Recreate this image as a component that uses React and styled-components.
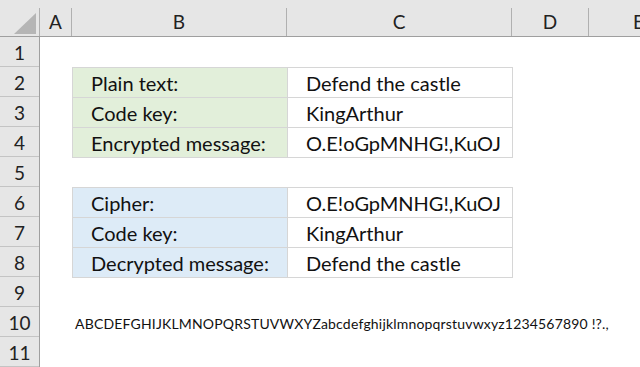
import React from 'react';
import styled, { createGlobalStyle } from 'styled-components';

const GlobalStyle = createGlobalStyle`
  html, body {
    margin: 0;
    padding: 0;
    background: #ffffff;
  }
  body {
    font-family: Lato, "Open Sans", sans-serif;
    color: #1f1f1f;
    overflow: hidden;
  }
`;

const columns = [
  { name: 'A', width: 32 },
  { name: 'B', width: 215 },
  { name: 'C', width: 225 },
  { name: 'D', width: 77 },
  { name: 'E', width: 100 },
];

const encryptTable = [
  ['Plain text:', 'Defend the castle'],
  ['Code key:', 'KingArthur'],
  ['Encrypted message:', 'O.E!oGpMNHG!,KuOJ'],
];

const decryptTable = [
  ['Cipher:', 'O.E!oGpMNHG!,KuOJ'],
  ['Code key:', 'KingArthur'],
  ['Decrypted message:', 'Defend the castle'],
];

const ROW_COUNT = 11;

const App = () => {
  const rows = [];
  for (let i = 1; i <= ROW_COUNT; i++) {
    if (i >= 2 && i <= 4) {
      const [label, value] = encryptTable[i - 2];
      rows.push(
        <Row key={i}>
          <Spacer />
          <LabelCell fill="#e2efda" last={i === 4}>{label}</LabelCell>
          <ValueCell last={i === 4}>{value}</ValueCell>
        </Row>
      );
    } else if (i >= 6 && i <= 8) {
      const [label, value] = decryptTable[i - 6];
      rows.push(
        <Row key={i}>
          <Spacer />
          <LabelCell fill="#ddebf7" last={i === 8}>{label}</LabelCell>
          <ValueCell last={i === 8}>{value}</ValueCell>
        </Row>
      );
    } else if (i === 10) {
      rows.push(
        <Row key={i}>
          <Spacer />
          <Alphabet>ABCDEFGHIJKLMNOPQRSTUVWXYZabcdefghijklmnopqrstuvwxyz1234567890 !?.,</Alphabet>
        </Row>
      );
    } else {
      rows.push(<Row key={i} />);
    }
  }

  return (
    <>
      <GlobalStyle />
      <Sheet>
        <HeaderBar>
          <Corner>
            <svg width="22" height="21" viewBox="0 0 22 21">
              <polygon points="22,0 22,21 0,21" fill="#b5b5b5" />
            </svg>
          </Corner>
          {columns.map((col) => (
            <ColHeader key={col.name} width={col.width}>
              {col.name}
            </ColHeader>
          ))}
        </HeaderBar>
        <Body>
          <RowNumbers>
            {Array.from({ length: ROW_COUNT }, (_, i) => (
              <RowNumber key={i}>{i + 1}</RowNumber>
            ))}
          </RowNumbers>
          <Grid>{rows}</Grid>
        </Body>
      </Sheet>
    </>
  );
};

export default App;

const Sheet = styled.div`
  width: 640px;
  height: 367px;
  overflow: hidden;
  background: #ffffff;
`;

const HeaderBar = styled.div`
  display: flex;
  align-items: flex-end;
  height: 37px;
  box-sizing: border-box;
  background: #e6e6e6;
  border-bottom: 1px solid #9f9f9f;
`;

const Corner = styled.div`
  flex: 0 0 40px;
  height: 28px;
  box-sizing: border-box;
  border-right: 1px solid #b0b0b0;
  display: flex;
  align-items: flex-start;
  justify-content: flex-end;
  padding: 5px 3px 0 0;
`;

const ColHeader = styled.div`
  flex: 0 0 ${({ width }) => width}px;
  height: 28px;
  box-sizing: border-box;
  border-right: 1px solid #b0b0b0;
  display: flex;
  align-items: center;
  justify-content: center;
  font-size: 19px;
  color: #222;
  padding-bottom: 2px;
`;

const Body = styled.div`
  display: flex;
`;

const RowNumbers = styled.div`
  width: 40px;
  flex: 0 0 40px;
  background: #e6e6e6;
  border-right: 1px solid #9f9f9f;
  box-sizing: border-box;
`;

const RowNumber = styled.div`
  height: 30px;
  box-sizing: border-box;
  border-bottom: 1px solid #c4c4c4;
  display: flex;
  align-items: center;
  justify-content: center;
  font-size: 19px;
  color: #222;
  padding-top: 1px;
`;

const Grid = styled.div`
  flex: 1;
  display: flex;
  flex-direction: column;
`;

const Row = styled.div`
  height: 30px;
  display: flex;
  box-sizing: border-box;
`;

const Spacer = styled.div`
  flex: 0 0 32px;
`;

const Cell = styled.div`
  box-sizing: border-box;
  height: 31px;
  display: flex;
  align-items: center;
  padding-left: 18px;
  font-size: 20px;
  color: #111;
  white-space: nowrap;
  border-top: 1px solid #d6d6d6;
  border-left: 1px solid #d6d6d6;
  border-bottom: ${({ last }) => (last ? '1px solid #d6d6d6' : 'none')};
`;

const LabelCell = styled(Cell)`
  flex: 0 0 215px;
  background: ${({ fill }) => fill};
`;

const ValueCell = styled(Cell)`
  flex: 0 0 226px;
  background: #ffffff;
  border-right: 1px solid #d6d6d6;
`;

const Alphabet = styled.div`
  display: flex;
  align-items: flex-end;
  padding: 0 0 5px 3px;
  font-size: 14px;
  letter-spacing: 0.18px;
  color: #111;
  white-space: nowrap;
`;
